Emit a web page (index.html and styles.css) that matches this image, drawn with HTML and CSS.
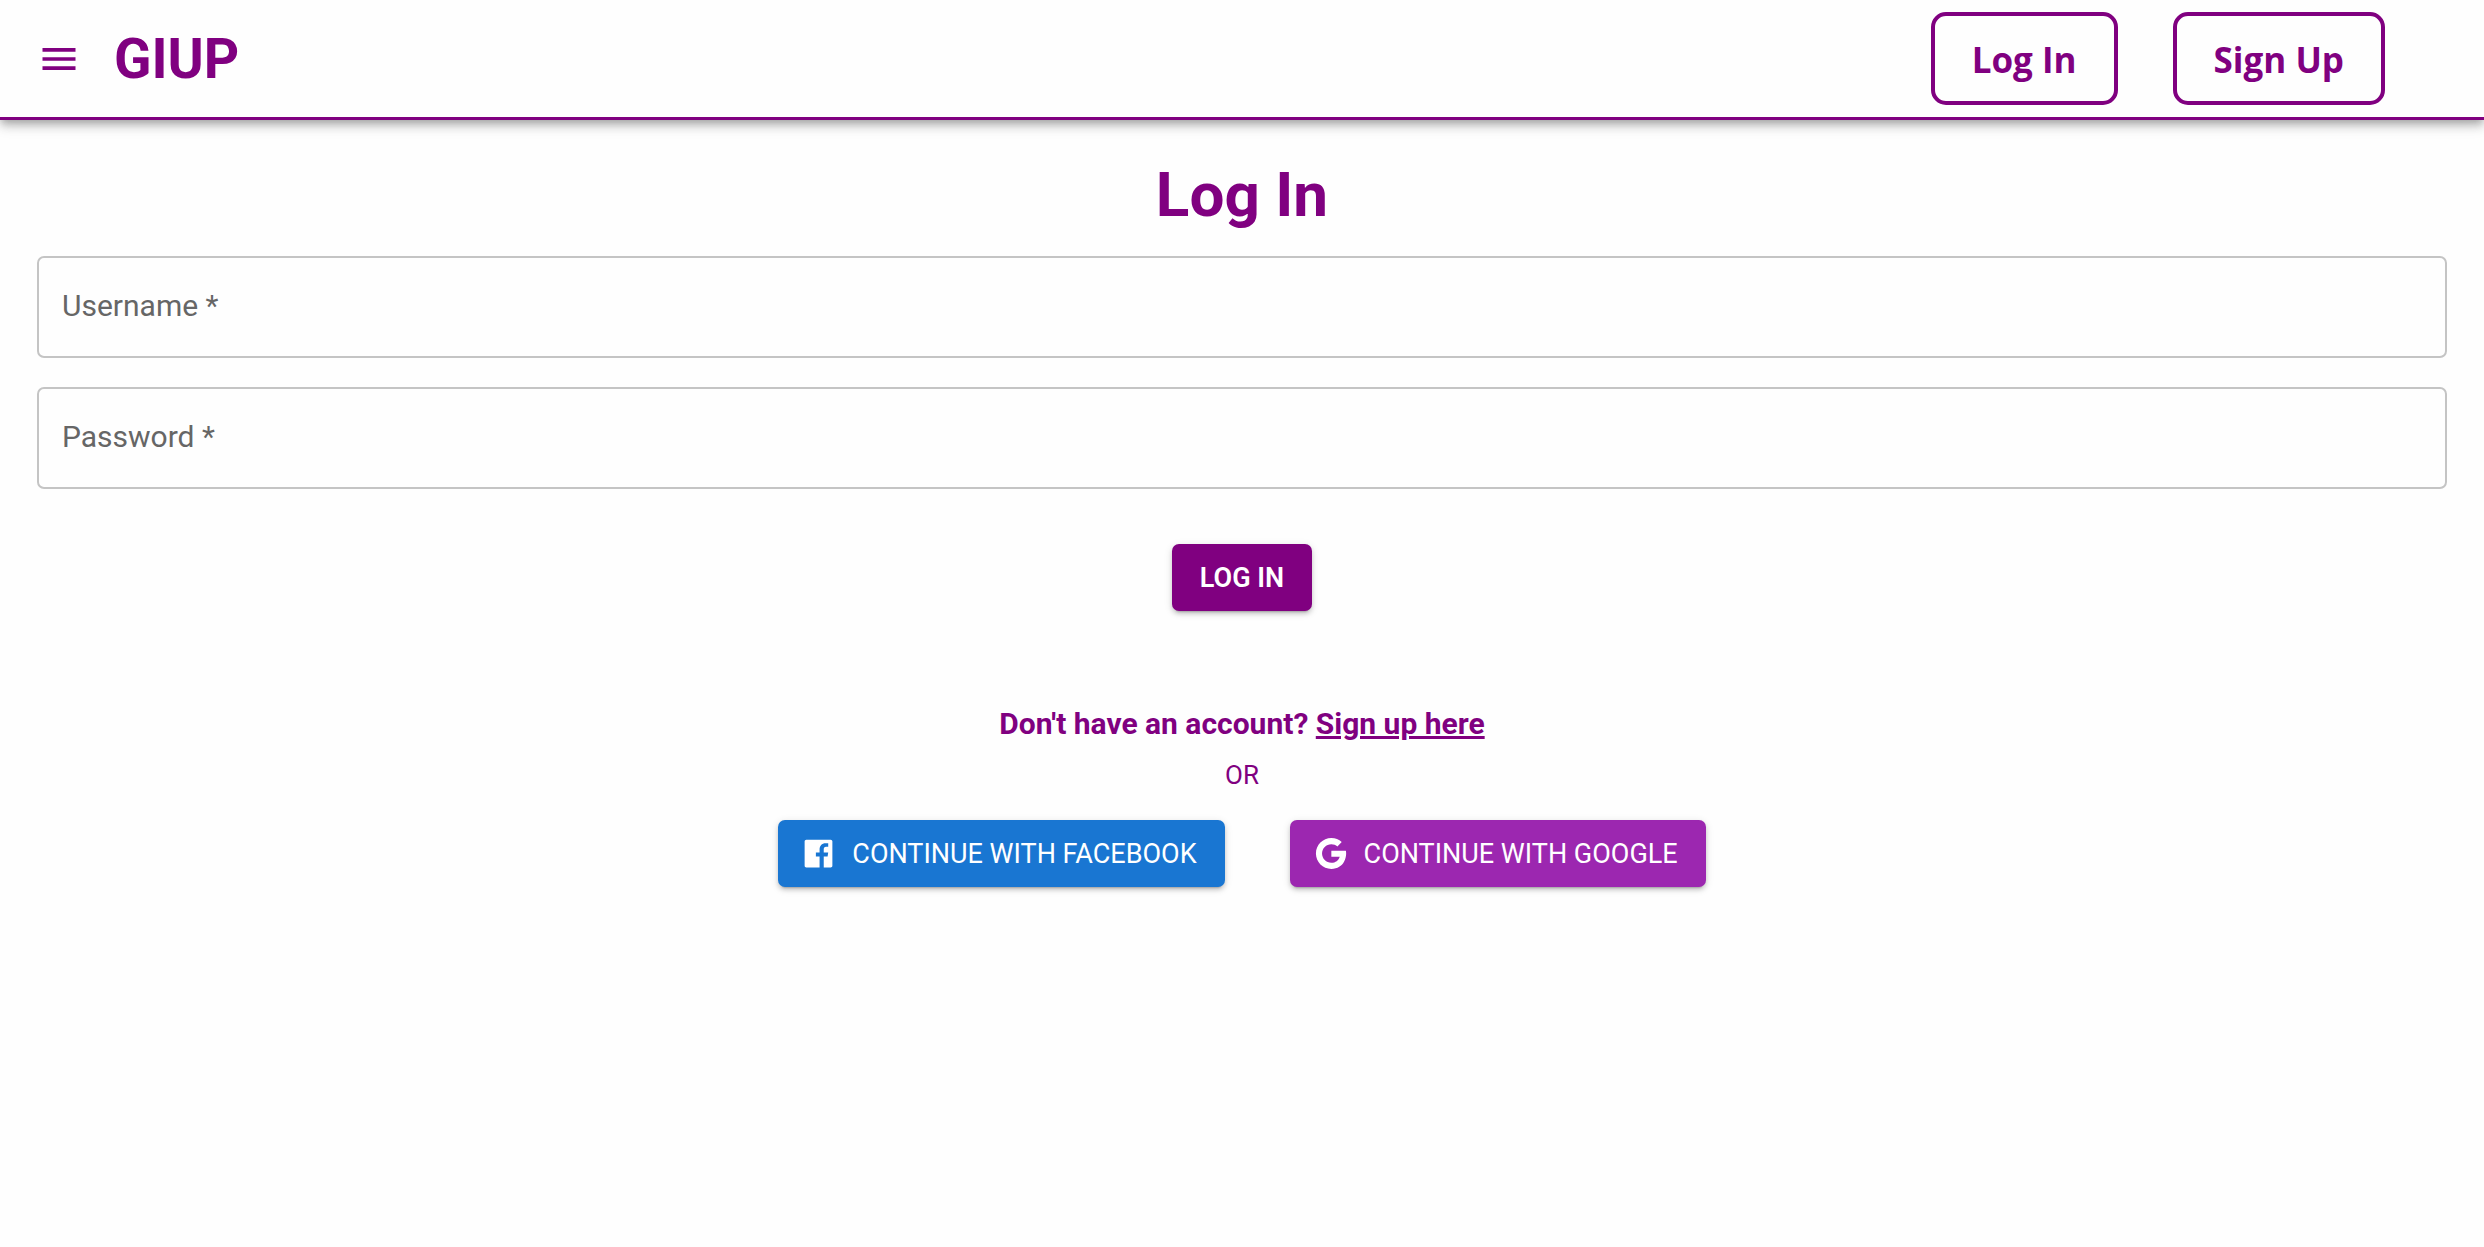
FILE: index.html
```html
<!DOCTYPE html>
<html lang="en">
<head>
<meta charset="utf-8">
<meta name="viewport" content="width=device-width, initial-scale=1">
<title>GIUP - Log In</title>
<link rel="stylesheet" href="styles.css">
</head>
<body>
<header class="app-bar">
  <button class="menu-button" type="button" aria-label="Menu">
    <svg class="menu-icon" viewBox="0 0 24 24" aria-hidden="true"><path d="M3 18h18v-2H3v2zm0-5h18v-2H3v2zm0-7v2h18V6H3z"/></svg>
  </button>
  <a class="brand" href="#">GIUP</a>
  <nav class="nav">
    <a class="nav-link" href="#">Log In</a>
    <a class="nav-link" href="#">Sign Up</a>
  </nav>
</header>
<main class="page">
  <h1 class="title">Log In</h1>
  <form class="form">
    <div class="field">
      <input class="field-input" id="username" type="text" required>
      <label class="field-label" for="username">Username *</label>
    </div>
    <div class="field">
      <input class="field-input" id="password" type="password" required>
      <label class="field-label" for="password">Password *</label>
    </div>
    <button class="button submit" type="submit">LOG IN</button>
  </form>
  <p class="signup">Don't have an account? <a class="signup-link" href="#">Sign up here</a></p>
  <p class="divider">OR</p>
  <div class="social">
    <button class="button social-button facebook" type="button">
      <svg class="social-icon" viewBox="0 0 24 24" aria-hidden="true"><path d="M19.900 3H4.100C3.500 3 3 3.500 3 4.100v15.800c0 .6.5 1.100 1.100 1.100h8.600v-7h-2.400v-2.600h2.400V9.400c0-2.500 1.400-4.100 3.900-4.100h1.700v2.300h-1.400c-1.100 0-1.500.6-1.500 1.600v2.200h2.900L17.900 14h-2.500v7h4.500c.6 0 1.100-.5 1.100-1.100V4.100C21 3.500 20.500 3 19.900 3z"/></svg>
      CONTINUE WITH FACEBOOK
    </button>
    <button class="button social-button google" type="button">
      <svg class="social-icon" viewBox="0 0 24 24" aria-hidden="true"><path d="M12.545 10.239v3.821h5.445c-.712 2.315-2.647 3.972-5.445 3.972-3.332 0-6.033-2.701-6.033-6.032s2.701-6.032 6.033-6.032c1.498 0 2.866.549 3.921 1.453l2.814-2.814C17.503 2.988 15.139 2 12.545 2 7.021 2 2.543 6.477 2.543 12s4.478 10 10.002 10c8.396 0 10.249-7.850 9.426-11.748z"/></svg>
      CONTINUE WITH GOOGLE
    </button>
  </div>
</main>
</body>
</html>
```
FILE: styles.css
```css
* { box-sizing: border-box; }
body {
  margin: 0;
  background: #fefefe;
  color: purple;
  font-family: Roboto, "Liberation Sans", sans-serif;
}
.app-bar {
  display: flex;
  align-items: center;
  min-height: 120px;
  padding: 0 99px 0 37px;
  background: #fefefe;
  border-bottom: 3px solid purple;
  box-shadow: 0 4px 7px -2px rgba(0, 0, 0, .2), 0 7px 9px rgba(0, 0, 0, .14), 0 2px 18px rgba(0, 0, 0, .12);
}
.menu-button {
  display: flex;
  padding: 0;
  border: 0;
  background: none;
  color: inherit;
}
.menu-icon { width: 44px; height: 44px; fill: currentColor; }
.brand {
  margin-left: 33px;
  color: inherit;
  font-size: 55px;
  font-weight: 700;
  line-height: 64px;
  text-decoration: none;
}
.nav { display: flex; gap: 55px; margin-left: auto; }
.nav-link {
  padding: 19px 37px 16px;
  border: 4px solid purple;
  border-radius: 15px;
  color: inherit;
  font-family: "Open Sans", "Noto Sans", sans-serif;
  font-size: 35px;
  font-weight: 700;
  line-height: 50px;
  text-decoration: none;
}
.page {
  display: flex;
  flex-direction: column;
  align-items: center;
  padding: 37px;
}
.title { margin: 0; font-size: 62px; font-weight: 700; line-height: 76px; }
.form {
  display: flex;
  flex-direction: column;
  align-items: center;
  gap: 29px;
  width: 100%;
  margin-top: 23px;
}
.field { position: relative; width: 100%; }
.field-input {
  display: block;
  width: 100%;
  height: 102px;
  padding: 0 24px;
  border: 2px solid #c4c4c4;
  border-radius: 7px;
  background: transparent;
  color: #222;
  font: 30px/42px Roboto, sans-serif;
}
.field-label {
  position: absolute;
  top: 29px;
  left: 25px;
  color: #666;
  font-size: 30px;
  line-height: 42px;
  pointer-events: none;
}
.button {
  display: flex;
  align-items: center;
  height: 67px;
  padding: 0 28px;
  border: 0;
  border-radius: 7px;
  color: #fff;
  font: 400 27px/44px Roboto, sans-serif;
  box-shadow: 0 5px 2px -4px rgba(0, 0, 0, .2), 0 3px 4px rgba(0, 0, 0, .14), 0 2px 9px rgba(0, 0, 0, .12);
}
.submit { margin-top: 26px; background: purple; font-weight: 600; }
.signup { margin: 92px 0 0; font-size: 30px; font-weight: 700; line-height: 42px; }
.signup-link { color: inherit; text-decoration-thickness: 3px; }
.divider { margin: 11px 0 0; font-size: 26px; line-height: 38px; }
.social { display: flex; gap: 65px; margin-top: 26px; }
.social-button { gap: 15px; padding-left: 22px; }
.social-icon { width: 37px; height: 37px; fill: currentColor; }
.facebook { background: #1976d2; }
.google { background: #9c27b0; }
```
